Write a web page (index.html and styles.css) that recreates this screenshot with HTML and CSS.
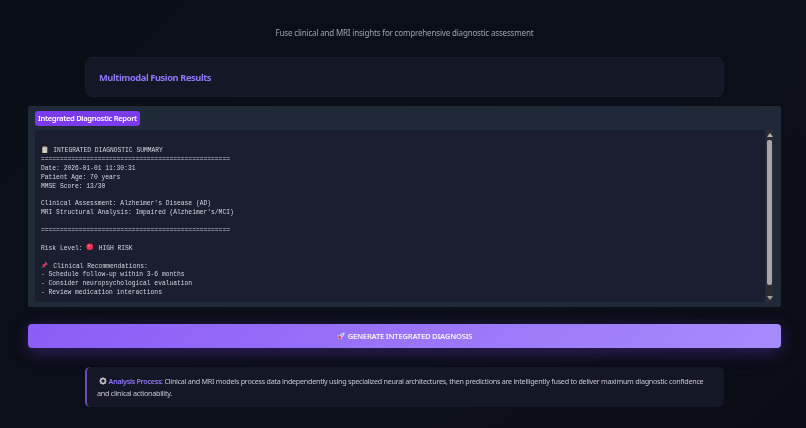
FILE: index.html
```html
<!DOCTYPE html>
<html lang="en">
<head>
<meta charset="utf-8">
<title>Multimodal Fusion</title>
<link rel="stylesheet" href="styles.css">
</head>
<body>
<main class="page">
  <p class="subtitle">Fuse clinical and MRI insights for comprehensive diagnostic assessment</p>
  <section class="results-card"><h2>Multimodal Fusion Results</h2></section>
  <section class="report">
    <div class="report-head"><span class="badge">Integrated Diagnostic Report</span></div>
    <div class="report-body">
      <div class="report-text">
        <div class="line"><svg class="emoji" viewBox="0 0 10 10"><rect x="1.5" y="1" width="7" height="8.6" rx=".6" fill="#a8876a"/><rect x="2.3" y="1.8" width="5.4" height="7" fill="#e8e4dc"/><rect x="3.5" y=".3" width="3" height="1.6" fill="#8d98a4"/><path d="M3 3.6h4M3 5h4M3 6.4h4" stroke="#8a8f98" stroke-width=".5"/></svg> INTEGRATED DIAGNOSTIC SUMMARY</div>
        <div class="line">==================================================</div>
        <div class="line">Date: 2026-01-01 11:30:31</div>
        <div class="line">Patient Age: 70 years</div>
        <div class="line">MMSE Score: 13/30</div>
        <div class="line"> </div>
        <div class="line">Clinical Assessment: Alzheimer's Disease (AD)</div>
        <div class="line">MRI Structural Analysis: Impaired (Alzheimer's/MCI)</div>
        <div class="line"> </div>
        <div class="line">==================================================</div>
        <div class="line"> </div>
        <div class="line">Risk Level: <svg class="emoji" viewBox="0 0 10 10"><circle cx="5" cy="5" r="4.4" fill="#e8334f"/><circle cx="3.8" cy="3.6" r="1.4" fill="#f7708a"/></svg> HIGH RISK</div>
        <div class="line"> </div>
        <div class="line"><svg class="emoji" viewBox="0 0 10 10"><path d="M5.6.8 9.2 4.4 8.2 5 7.2 4.6 5.6 6.4 5.6 8 4.8 8.6 1.6 5.4 2.2 4.6 3.8 4.6 5.6 3 5.2 1.8Z" fill="#e83a62"/><path d="M3 7 .8 9.4" stroke="#b9bfc7" stroke-width=".7"/></svg> Clinical Recommendations:</div>
        <div class="line">- Schedule follow-up within 3-6 months</div>
        <div class="line">- Consider neuropsychological evaluation</div>
        <div class="line">- Review medication interactions</div>
      </div>
      <div class="scrollbar">
        <span class="arrow-up"></span>
        <span class="thumb"></span>
        <span class="arrow-down"></span>
      </div>
    </div>
  </section>
  <button class="generate" type="button"><svg class="btn-icon" viewBox="0 0 10 10"><path d="M9.5.5C7 .6 5 1.6 3.4 3.6L1.2 4.2.5 5.2 2.4 5.6 4.4 7.6 4.8 9.5 5.8 8.8 6.4 6.6C8.4 5 9.4 3 9.5.5Z" fill="#d9dbe6"/><circle cx="6.4" cy="3.6" r="1" fill="#5aa0e0"/><path d="M3.2 4 1.6 5.4 4.6 8.4 6 6.8Z" fill="#e8405f"/><path d="M2 7 .6 9.4 3 8Z" fill="#f59a3c"/></svg> GENERATE INTEGRATED DIAGNOSIS</button>
  <section class="note">
    <p><svg class="gear" viewBox="0 0 10 10"><circle cx="5" cy="5" r="2.9" fill="none" stroke="#d5d7de" stroke-width="1.5"/><path d="M5 .4v1.6M5 8v1.6M.4 5H2M8 5h1.6M1.8 1.8 2.9 2.9M7.1 7.1 8.2 8.2M1.8 8.2 2.9 7.1M7.1 2.9 8.2 1.8" stroke="#d5d7de" stroke-width="1.3"/></svg> <strong>Analysis Process:</strong> Clinical and MRI models process data independently using specialized neural architectures, then predictions are intelligently fused to deliver maximum diagnostic confidence and clinical actionability.</p>
  </section>
</main>
</body>
</html>
```
FILE: styles.css
```css
* { box-sizing: border-box; }
html, body { margin: 0; height: 100%; overflow: hidden; }
body {
  background: linear-gradient(135deg, #0a0e17 0%, #0b0f19 60%, #0a0d16 100%);
  font-family: "Noto Sans", "Open Sans", sans-serif;
  color: #c9ccd3;
}
.page {
  display: flex;
  flex-direction: column;
  height: 428px;
  padding: 0 25px 0 28px;
  filter: blur(0.35px);
}
.subtitle {
  margin: 26px 0 0;
  height: 13px;
  font-size: 8px;
  letter-spacing: -.17px;
  line-height: 13px;
  text-align: center;
  color: #a0a3ac;
}
.results-card {
  width: 639px;
  height: 40px;
  margin: 18px auto 0;
  padding: 0 13px;
  display: flex;
  align-items: center;
  background: #141725;
  border: 1px solid #181c2b;
  border-radius: 7px;
}
.results-card h2 {
  margin: 0;
  font-size: 9.3px;
  letter-spacing: -.42px;
  font-weight: 700;
  color: #8f78f6;
}
.report {
  height: 201px;
  margin-top: 9px;
  padding: 5px 8px 5px 7px;
  display: flex;
  flex-direction: column;
  background: #1f2937;
  border-radius: 2px;
}
.report-head {
  display: flex;
  align-items: flex-start;
  height: 19px;
}
.badge {
  height: 15px;
  padding: 0 3px;
  font-size: 7.6px;
  letter-spacing: -.33px;
  font-weight: 600;
  line-height: 15px;
  color: #ffffff;
  background: #7c3aed;
  border-radius: 3px;
}
.report-body {
  flex: 1;
  display: flex;
  gap: 1px;
  min-height: 0;
}
.report-text {
  width: 731px;
  padding: 17px 0 0 6px;
  font-family: "Liberation Mono", monospace;
  font-size: 6.3px;
  line-height: 8.9px;
  color: #d4d7de;
  background: #1a1e2f;
  border-radius: 3px;
}
.line { height: 8.9px; white-space: pre; }
.emoji { width: 7.5px; height: 7.5px; margin: -2px 1px -2px 0; vertical-align: 1px; }
.scrollbar {
  width: 7px;
  display: flex;
  flex-direction: column;
  align-items: center;
  background: #2a2c32;
  padding-top: 3px;
}
.arrow-up, .arrow-down {
  width: 0;
  height: 0;
  border-left: 3px solid transparent;
  border-right: 3px solid transparent;
}
.arrow-up { border-bottom: 4px solid #b5b5b5; }
.arrow-down { border-top: 4px solid #a0a0a0; margin-top: 11px; }
.thumb {
  width: 5px;
  height: 145px;
  margin-top: 3px;
  background: #a6a6a6;
  border-radius: 2px;
}
.generate {
  flex: none;
  height: 24px;
  margin-top: 17px;
  display: flex;
  align-items: center;
  justify-content: center;
  gap: 3px;
  border: 0;
  border-radius: 4px;
  font-family: "Noto Sans", "Open Sans", sans-serif;
  font-size: 7.6px;
  letter-spacing: -.2px;
  font-weight: 600;
  color: #f6f3ff;
  background: linear-gradient(135deg, #8b5cf6, #a78bfa);
  box-shadow: 0 4px 16px rgba(124, 58, 237, .35);
}
.btn-icon { width: 8px; height: 8px; }
.note {
  width: 639px;
  height: 40px;
  margin: 19px auto 0;
  padding: 8px 10px;
  background: #141725;
  border-left: 2px solid #6d4bb8;
  border-radius: 5px;
}
.note p {
  margin: 0;
  font-size: 7.2px;
  letter-spacing: -.26px;
  line-height: 12px;
  color: #c4c6ce;
}
.note strong { font-weight: 600; letter-spacing: -.3px; color: #8f78f6; }
.gear { width: 8px; height: 8px; margin-left: 2px; vertical-align: -1px; }
```
